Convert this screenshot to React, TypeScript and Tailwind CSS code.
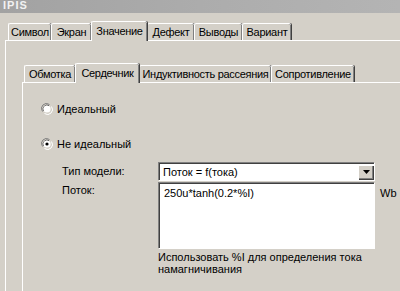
import React from 'react';

type TabProps = { label: string; width: string; active?: boolean };

function Tab({ label, width, active }: TabProps) {
  // classic windows tab: white top-left, dark right edge
  if (active) {
    return (
      <div
        className={`${width} relative z-10 -mb-px h-[20px] shrink-0 whitespace-nowrap tracking-[-0.3px] flex items-center justify-center bg-[#d4d0c8] border-l border-t border-white rounded-tl-[2px] rounded-tr-[2px] shadow-[inset_-1px_0_0_#808080,1px_0_0_#404040] pb-[1px]`}
      >
        {label}
      </div>
    );
  }
  return (
    <div
      className={`${width} h-[17px] shrink-0 whitespace-nowrap tracking-[-0.3px] flex items-center justify-center bg-[#d4d0c8] border-l border-t border-white rounded-tl-[2px] rounded-tr-[2px] shadow-[inset_-1px_0_0_#808080,1px_0_0_#404040]`}
    >
      {label}
    </div>
  );
}

function Radio({ checked }: { checked?: boolean }) {
  return (
    <svg width="12" height="12" viewBox="0 0 12 12" className="shrink-0">
      <path d="M1.5 8.5 A5 5 0 0 1 8.5 1.5" stroke="#808080" strokeWidth="1" fill="none" />
      <path d="M2.6 8 A4 4 0 0 1 8 2.6" stroke="#404040" strokeWidth="1" fill="none" />
      <path d="M10.5 3.5 A5 5 0 0 1 3.5 10.5" stroke="#ffffff" strokeWidth="1" fill="none" />
      <circle cx="6" cy="6" r="3.6" fill="#ffffff" />
      {checked && <circle cx="6" cy="6" r="1.6" fill="#000000" />}
    </svg>
  );
}

export default function App() {
  return (
    <div className="w-[400px] h-[291px] overflow-hidden bg-[#d4d0c8] text-[11px] leading-[12px] text-black font-['Liberation_Sans',Arial,sans-serif]">
      {/* Title bar */}
      <div className="h-[13px] bg-gradient-to-r from-[#a2a2a2] via-[#acacac] to-[#b4b4b4] text-[#f2f2f2] font-bold pl-[3px] leading-[11px] tracking-[1px]">
        IPIS
      </div>

      {/* Outer tabs */}
      <div className="mt-[8px] flex items-end pl-[8px] h-[19px]">
        <Tab label="Символ" width="w-[43px]" />
        <Tab label="Экран" width="w-[40px]" />
        <Tab label="Значение" width="w-[56px]" active />
        <Tab label="Дефект" width="w-[47px]" />
        <Tab label="Выводы" width="w-[48px]" />
        <Tab label="Вариант" width="w-[49px]" />
      </div>

      <div className="ml-[5px] border-l border-t border-white h-[260px]">
        {/* Inner tabs */}
        <div className="mt-[24px] ml-[16px] flex items-end pl-[2px] h-[17px]">
          <Tab label="Обмотка" width="w-[51px]" />
          <Tab label="Сердечник" width="w-[64px]" active />
          <Tab label="Индуктивность рассеяния" width="w-[132px]" />
          <Tab label="Сопротивление" width="w-[83px]" />
        </div>

        <div className="ml-[16px] border-l border-t border-white h-[220px] pl-[18px]">
          <div className="mt-[20px] flex items-center gap-[4px] h-[12px]">
            <Radio />
            <span>Идеальный</span>
          </div>
          <div className="mt-[23px] flex items-center gap-[4px] h-[12px]">
            <Radio checked />
            <span>Не идеальный</span>
          </div>

          <div className="mt-[12px] ml-[21px] grid grid-cols-[96px_216px_auto]">
            <div className="flex items-center h-[18px]">Тип модели:</div>
            <div className="h-[18px] bg-white border-l border-t border-[#808080] shadow-[inset_1px_1px_0_#404040,1px_1px_0_#ffffff] flex items-center justify-between">
              <span className="pl-[4px]">Поток = f(тока)</span>
              <div className="w-[15px] h-[14px] mr-[1px] bg-[#d4d0c8] border-l border-t border-white shadow-[inset_-1px_-1px_0_#808080,1px_1px_0_#404040] flex items-center justify-center">
                <svg width="7" height="4" viewBox="0 0 7 4">
                  <path d="M0 0 H7 L3.5 4 Z" fill="#000" />
                </svg>
              </div>
            </div>
            <div />

            <div className="pt-[4px]">Поток:</div>
            <div className="mt-[2px] h-[66px] bg-white border-l border-t border-[#808080] shadow-[inset_1px_1px_0_#404040,1px_1px_0_#ffffff] pl-[5px] pt-[4px]">
              250u*tanh(0.2*%I)
            </div>
            <div className="pl-[6px] pt-[7px]">Wb</div>

            <div />
            <div className="mt-[3px] w-[230px]">
              Использовать %I для определения тока намагничивания
            </div>
            <div />
          </div>
        </div>
      </div>
    </div>
  );
}
